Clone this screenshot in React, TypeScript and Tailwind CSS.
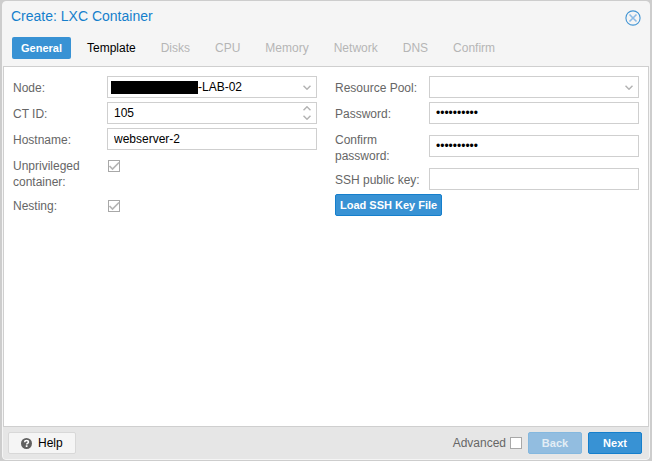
import { useId, useState, type ReactNode } from "react";

const control =
  "block h-[22px] w-full appearance-none rounded-none border border-[#cfcfcf] bg-white px-1.5 text-xs leading-4 text-black outline-none focus:border-[#3892d4]";

function Chevron({ up = false }: { up?: boolean }) {
  return (
    <svg width="8" height="5" viewBox="0 0 8 5" fill="none" stroke="#b4b4b4" strokeWidth="1.5">
      <path d={up ? "M0.5 4.2 4 0.8 7.5 4.2" : "M0.5 0.8 4 4.2 7.5 0.8"} />
    </svg>
  );
}

function Row({ label, center = false, children }: { label: string; center?: boolean; children: (id: string) => ReactNode }) {
  const id = useId();
  return (
    <div className={center ? "flex items-center" : "flex items-start"}>
      <label htmlFor={id} className="w-[94px] shrink-0 self-start pt-1 pr-2 leading-4 text-[#666]">
        {label}
      </label>
      <div className="relative min-w-0 flex-1">{children(id)}</div>
    </div>
  );
}

function Check({ id, defaultChecked = false }: { id: string; defaultChecked?: boolean }) {
  return (
    <span className="grid size-3">
      <input
        id={id}
        type="checkbox"
        defaultChecked={defaultChecked}
        className="peer col-start-1 row-start-1 size-3 appearance-none border border-[#a8a8a8] bg-white"
      />
      <svg
        viewBox="0 0 12 12"
        className="pointer-events-none invisible col-start-1 row-start-1 size-3 peer-checked:visible"
        fill="none"
        stroke="#b4b4b4"
        strokeWidth="1.7"
      >
        <path d="M1.500 6 4.500 9 11 2.500" />
      </svg>
    </span>
  );
}

const tabs = ["General", "Template", "Disks", "CPU", "Memory", "Network", "DNS", "Confirm"];

export default function App() {
  const [active, setActive] = useState("General");
  const [ctId, setCtId] = useState(105);

  return (
    <div className="flex min-h-screen flex-col bg-[#cdcdcd] px-0.5 py-px font-['Liberation_Sans',Arial,sans-serif] text-xs">
      <section
        aria-labelledby="dialog-title"
        className="flex flex-1 flex-col overflow-hidden rounded border border-[#f5f5f5] bg-[#f5f5f5]"
      >
        <header className="flex h-7 items-center justify-between px-2">
          <h1 id="dialog-title" className="text-sm leading-5 text-[#157fcc]">
            Create: LXC Container
          </h1>
          <button type="button" aria-label="Close" className="mt-1">
            <svg width="16" height="16" viewBox="0 0 16 16" fill="none">
              <circle cx="8" cy="8" r="7.1" stroke="#4496d4" strokeWidth="1.1" />
              <path d="m4.500 4.500 7 7m0-7-7 7" stroke="#8dbce6" strokeWidth="1.6" />
            </svg>
          </button>
        </header>

        <nav role="tablist" className="flex h-9 items-center gap-[7px] px-[9px]">
          {tabs.map((tab, i) => (
            <button
              key={tab}
              type="button"
              role="tab"
              aria-selected={active === tab}
              disabled={i > 1}
              onClick={() => setActive(tab)}
              className={
                "h-[22px] rounded-xs px-[9px] leading-4 " +
                (active === tab
                  ? "bg-[#3892d4] text-[11px] font-bold text-white"
                  : i > 1
                    ? "text-[#b5b5b5]"
                    : "text-black")
              }
            >
              {tab}
            </button>
          ))}
        </nav>

        <main className="grid flex-1 grid-cols-2 content-start items-start gap-x-[18px] border border-[#cfcfcf] bg-white p-[9px]">
          <div className="flex flex-col gap-1">
            <Row label="Node:">
              {(id) => (
                <>
                  <select id={id} className={control + " pl-[90px]"}>
                    <option>-LAB-02</option>
                  </select>
                  <span className="pointer-events-none absolute top-[5px] left-1 h-[13px] w-[87px] bg-black" />
                  <span className="pointer-events-none absolute inset-y-0 right-1.5 flex items-center">
                    <Chevron />
                  </span>
                </>
              )}
            </Row>
            <Row label="CT ID:">
              {(id) => (
                <>
                  <input
                    id={id}
                    inputMode="numeric"
                    value={ctId}
                    onChange={(e) => setCtId(Number(e.target.value) || 0)}
                    className={control}
                  />
                  <span className="absolute inset-y-0 right-1.5 flex flex-col justify-center gap-1">
                    <button type="button" aria-label="Increase" onClick={() => setCtId(ctId + 1)}>
                      <Chevron up />
                    </button>
                    <button type="button" aria-label="Decrease" onClick={() => setCtId(ctId - 1)}>
                      <Chevron />
                    </button>
                  </span>
                </>
              )}
            </Row>
            <Row label="Hostname:">{(id) => <input id={id} defaultValue="webserver-2" className={control} />}</Row>
            <Row label="Unprivileged container:">
              {(id) => (
                <div className="px-px pt-1.5">
                  <Check id={id} defaultChecked />
                </div>
              )}
            </Row>
            <Row label="Nesting:">
              {(id) => (
                <div className="px-px pt-1.5">
                  <Check id={id} defaultChecked />
                </div>
              )}
            </Row>
          </div>

          <div className="flex flex-col gap-1">
            <Row label="Resource Pool:">
              {(id) => (
                <>
                  <select id={id} className={control}>
                    <option></option>
                  </select>
                  <span className="pointer-events-none absolute inset-y-0 right-1.5 flex items-center">
                    <Chevron />
                  </span>
                </>
              )}
            </Row>
            <Row label="Password:">
              {(id) => <input id={id} type="password" defaultValue="abcdefghij" className={control} />}
            </Row>
            <Row label="Confirm password:" center>
              {(id) => <input id={id} type="password" defaultValue="abcdefghij" className={control} />}
            </Row>
            <Row label="SSH public key:">{(id) => <input id={id} className={control} />}</Row>
            <button
              type="button"
              className="h-[22px] self-start rounded-xs border border-[#157fcc] bg-[#3892d4] px-1 text-[11px] leading-4 font-bold text-white"
            >
              Load SSH Key File
            </button>
          </div>
        </main>

        <footer className="flex h-8 items-center justify-between bg-[#e6e6e6] pr-[7px] pl-[5px]">
          <button
            type="button"
            className="flex h-[22px] items-center gap-1.5 rounded-xs border border-[#d8d8d8] bg-[#f5f5f5] px-3 leading-4 text-black"
          >
            <svg width="11" height="11" viewBox="0 0 12 12">
              <circle cx="6" cy="6" r="6" fill="#606060" />
              <path
                d="M3.900 4.600C4 3.200 4.900 2.700 6 2.700s2.100.6 2.100 1.800C8.100 5.700 6.200 5.700 6.200 7.200"
                fill="none"
                stroke="#fff"
                strokeWidth="1.7"
              />
              <path d="M5.200 8h1.900v1.700H5.200z" fill="#fff" />
            </svg>
            Help
          </button>
          <div className="flex items-center">
            <label htmlFor="advanced" className="mr-1 leading-4 text-[#666]">
              Advanced
            </label>
            <Check id="advanced" />
            <button
              type="button"
              disabled
              className="ml-1.5 h-[22px] w-[54px] rounded-xs border border-[#84b8df] bg-[#92bde0] text-[11px] leading-4 font-bold text-[#e3edf5]"
            >
              Back
            </button>
            <button
              type="button"
              className="ml-1.5 h-[22px] w-[54px] rounded-xs border border-[#157fcc] bg-[#3892d4] text-[11px] leading-4 font-bold text-white"
            >
              Next
            </button>
          </div>
        </footer>
      </section>
    </div>
  );
}
